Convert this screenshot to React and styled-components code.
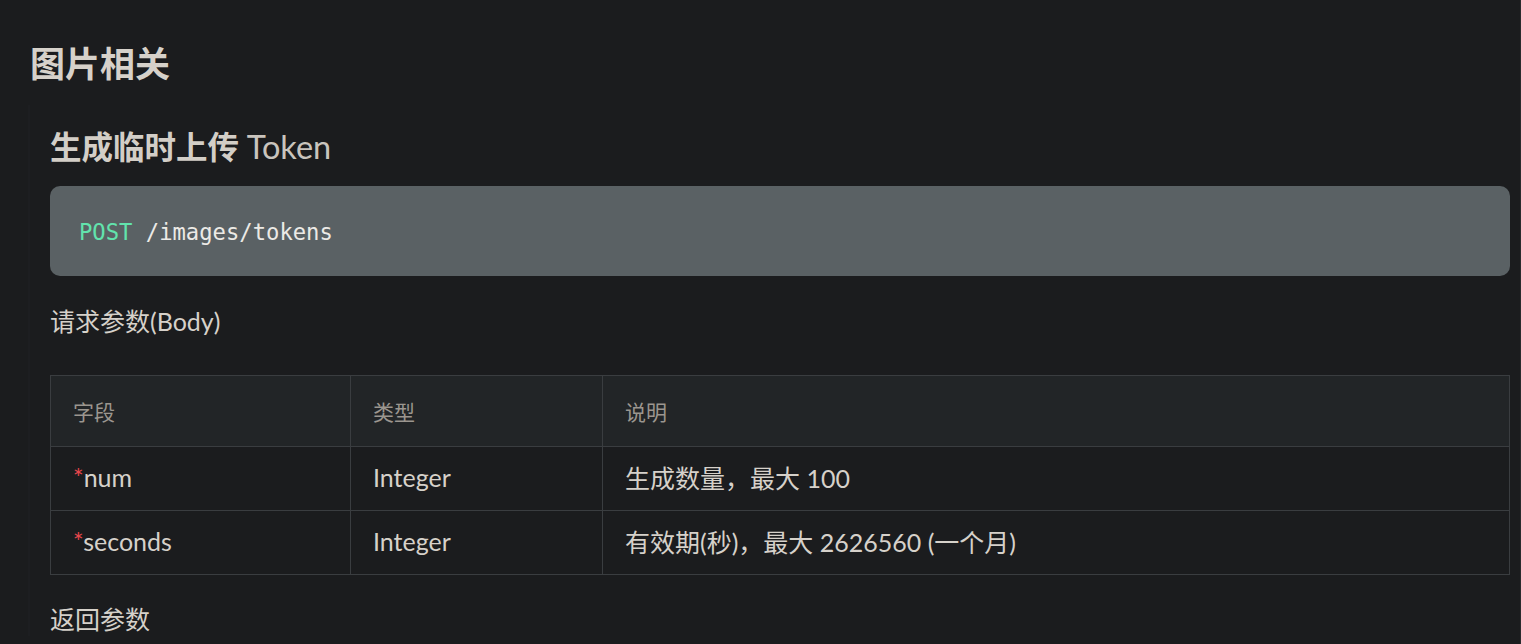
import React from 'react'
import styled, { createGlobalStyle } from 'styled-components'

const GlobalStyle = createGlobalStyle`
  html, body {
    margin: 0;
    padding: 0;
    background: #1b1c1e;
  }
  body {
    font-family: Lato, "Noto Sans CJK SC", sans-serif;
    color: #d3cec7;
  }
`

const Page = styled.main`
  box-sizing: border-box;
  min-height: 100vh;
  padding: 41px 10px 0 30px;
  border-right: 1px solid #2a2b2e;
`

const Title = styled.h1`
  margin: 0 0 20px;
  font-size: 35px;
  line-height: 44px;
  font-weight: 700;
  color: #d6d1ca;
`

const Section = styled.section`
  margin-left: -2px;
  padding: 22px 0 0 20px;
  border-left: 2px solid #1d1e21;
`

const SubTitle = styled.h2`
  margin: 0 0 19px;
  font-size: 31.5px;
  line-height: 40px;
  font-weight: 700;
  color: #d3cec7;

  span {
    font-weight: 400;
    font-size: 32.5px;
    color: #c9c4bd;
  }
`

const CodeBlock = styled.pre`
  margin: 0;
  box-sizing: border-box;
  height: 90px;
  display: flex;
  align-items: center;
  padding: 2px 29px 0;
  border-radius: 10px;
  background: #5a6164;
  font-family: "DejaVu Sans Mono", monospace;
  font-size: 22.2px;
  color: #eceae6;
`

const Method = styled.span`
  color: #62e3ad;
`

const Label = styled.p`
  margin: ${(p) => p.$top || 28}px 0 0;
  font-size: 25px;
  line-height: 34px;
  color: #d6d1ca;
`

const Table = styled.table`
  width: 100%;
  margin-top: 37px;
  border-collapse: collapse;
  font-size: 25px;
`

const HeadCell = styled.th`
  height: 70px;
  padding: 0 22px;
  text-align: left;
  font-weight: 400;
  font-size: 21px;
  color: #9b968f;
  background: #222527;
  border: 1px solid #3a3d40;
  width: ${(p) => p.$w || 'auto'};
`

const Cell = styled.td`
  height: 64px;
  padding: 0 22px 3px;
  box-sizing: border-box;
  border: 1px solid #3a3d40;
  color: #d6d1ca;
`

const Required = styled.span`
  color: #e8474c;
`

const rows = [
  { name: 'num', type: 'Integer', desc: '生成数量，最大 100' },
  { name: 'seconds', type: 'Integer', desc: '有效期(秒)，最大 2626560 (一个月)' },
]

const App = () => {
  return (
    <Page>
      <GlobalStyle />
      <Title>图片相关</Title>
      <Section>
        <SubTitle>
          生成临时上传 <span>Token</span>
        </SubTitle>
        <CodeBlock>
          <Method>POST</Method>&nbsp;/images/tokens
        </CodeBlock>
        <Label>请求参数(Body)</Label>
        <Table>
          <thead>
            <tr>
              <HeadCell $w="255px">字段</HeadCell>
              <HeadCell $w="207px">类型</HeadCell>
              <HeadCell>说明</HeadCell>
            </tr>
          </thead>
          <tbody>
            {rows.map((r) => (
              <tr key={r.name}>
                <Cell>
                  <Required>*</Required>
                  {r.name}
                </Cell>
                <Cell>{r.type}</Cell>
                <Cell>{r.desc}</Cell>
              </tr>
            ))}
          </tbody>
        </Table>
        <Label $top={27}>返回参数</Label>
      </Section>
    </Page>
  )
}

export default App
